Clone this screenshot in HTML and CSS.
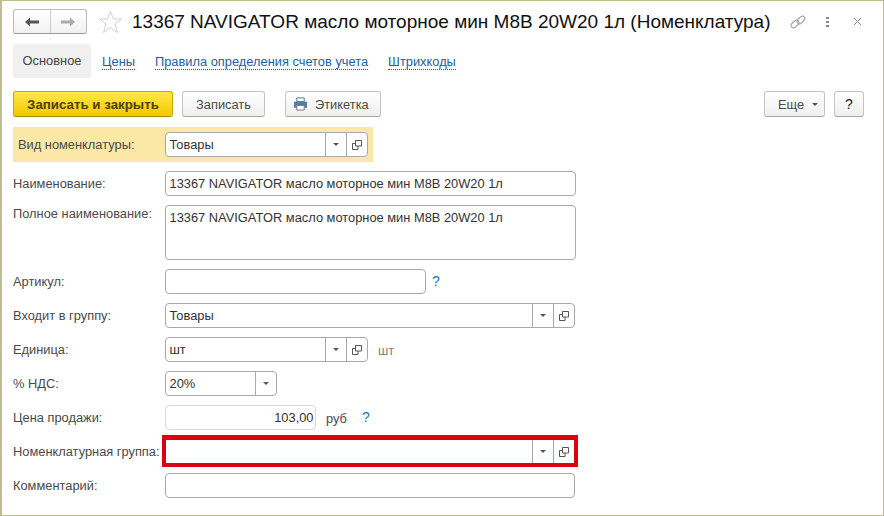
FILE: index.html
```html
<!DOCTYPE html>
<html lang="ru">
<head>
<meta charset="utf-8">
<title>13367 NAVIGATOR</title>
<link rel="stylesheet" href="styles.css">
</head>
<body>
<div class="window">
  <header class="head">
    <div class="nav">
      <button class="nav-btn"><svg width="16" height="12" viewBox="0 0 16 12"><path d="M1 6 6 1.500V4.600H15V7.400H6V10.500Z" fill="#555"/></svg></button>
      <button class="nav-btn nav-btn-next"><svg width="16" height="12" viewBox="0 0 16 12"><path d="M15 6 10 1.500V4.600H1V7.400H10V10.500Z" fill="#aaa"/></svg></button>
    </div>
    <svg class="star" width="25" height="24" viewBox="0 0 25 24"><path d="M12.500 1.500 15.500 9H23.500L17 14 19.500 22.500 12.500 17.500 5.500 22.500 8 14 1.500 9H9.500Z" fill="#fff" stroke="#cfcfcf" stroke-width="1"/></svg>
    <h1 class="title">13367 NAVIGATOR масло моторное мин M8B 20W20 1л (Номенклатура)</h1>
    <div class="head-tools">
      <svg width="16" height="16" viewBox="0 0 16 16" fill="none" stroke="#999" stroke-width="1"><rect x="0.500" y="7.500" width="9" height="5" rx="2.500" transform="rotate(-45 5 10)"/><rect x="6.500" y="3.500" width="9" height="5" rx="2.500" transform="rotate(-45 11 6)"/></svg>
      <span class="dots"><i></i><i></i><i></i></span>
      <svg width="9" height="9" viewBox="0 0 9 9" stroke="#888" stroke-width="1"><path d="M1 1 8 8M8 1 1 8"/></svg>
    </div>
  </header>

  <nav class="tabs">
    <span class="tab tab-active">Основное</span>
    <a class="tab">Цены</a>
    <a class="tab">Правила определения счетов учета</a>
    <a class="tab">Штрихкоды</a>
  </nav>

  <div class="commands">
    <button class="btn btn-primary">Записать и закрыть</button>
    <button class="btn btn-save">Записать</button>
    <button class="btn btn-label">
      <svg width="15" height="14" viewBox="0 0 16 15"><path d="M4 1h8v4H4z" fill="#fff" stroke="#4f6f8f"/><path d="M1 5h14v6.500H1z" fill="#4f7fa8"/><path d="M4 9h8v5H4z" fill="#fff" stroke="#777"/></svg>
      Этикетка
    </button>
    <span class="spacer"></span>
    <button class="btn btn-more">Еще <i class="caret"></i></button>
    <button class="btn btn-help">?</button>
  </div>

  <form class="form">
    <div class="row row-marked">
      <label class="label">Вид номенклатуры:</label>
      <div class="field w-kind"><span class="value">Товары</span><span class="cell"><i class="caret"></i></span><span class="cell"><svg class="open" width="10" height="10" viewBox="0 0 10 10" fill="none" stroke="#555"><path d="M3.500.5h6v5.500h-6z"/><path d="M3.500 3.500H.5V9.500h5.500V6"/></svg></span></div>
    </div>
    <div class="row">
      <label class="label">Наименование:</label>
      <div class="field w-name"><span class="value">13367 NAVIGATOR масло моторное мин M8B 20W20 1л</span></div>
    </div>
    <div class="row">
      <label class="label label-top">Полное наименование:</label>
      <div class="field w-name field-tall"><span class="value">13367 NAVIGATOR масло моторное мин M8B 20W20 1л</span></div>
    </div>
    <div class="row">
      <label class="label">Артикул:</label>
      <div class="field w-sku"></div>
      <span class="hint">?</span>
    </div>
    <div class="row">
      <label class="label">Входит в группу:</label>
      <div class="field w-wide"><span class="value">Товары</span><span class="cell"><i class="caret"></i></span><span class="cell"><svg class="open" width="10" height="10" viewBox="0 0 10 10" fill="none" stroke="#555"><path d="M3.500.5h6v5.500h-6z"/><path d="M3.500 3.500H.5V9.500h5.500V6"/></svg></span></div>
    </div>
    <div class="row">
      <label class="label">Единица:</label>
      <div class="field w-unit"><span class="value">шт</span><span class="cell"><i class="caret"></i></span><span class="cell"><svg class="open" width="10" height="10" viewBox="0 0 10 10" fill="none" stroke="#555"><path d="M3.500.5h6v5.500h-6z"/><path d="M3.500 3.500H.5V9.500h5.500V6"/></svg></span></div>
      <span class="unit-note">шт</span>
    </div>
    <div class="row">
      <label class="label">% НДС:</label>
      <div class="field w-vat"><span class="value">20%</span><span class="cell"><i class="caret"></i></span></div>
    </div>
    <div class="row">
      <label class="label">Цена продажи:</label>
      <div class="field w-price field-soft"><span class="value value-right">103,00</span></div>
      <span class="currency">руб</span>
      <span class="hint hint-price">?</span>
    </div>
    <div class="row">
      <label class="label">Номенклатурная группа:</label>
      <div class="field w-wide field-flagged"><span class="value"></span><span class="cell"><i class="caret"></i></span><span class="cell"><svg class="open" width="10" height="10" viewBox="0 0 10 10" fill="none" stroke="#555"><path d="M3.500.5h6v5.500h-6z"/><path d="M3.500 3.500H.5V9.500h5.500V6"/></svg></span></div>
    </div>
    <div class="row">
      <label class="label">Комментарий:</label>
      <div class="field w-wide"></div>
    </div>
  </form>
</div>
</body>
</html>
```
FILE: styles.css
```css
* { box-sizing: border-box; }
html, body { margin: 0; height: 100%; }
body { font-family: "Liberation Sans", Arial, sans-serif; font-size: 12.85px; color: #4a4a4a; background: #fff; }
.window { width: 884px; height: 516px; border: 1px solid #bdbd8e; border-width: 1px 1px 1px 2px; padding: 8px 19px 0 11px; overflow: hidden; }
.head { display: flex; align-items: center; height: 25px; }
.nav { display: flex; width: 74px; height: 25px; border: 1px solid #bdbdbd; border-bottom-color: #999; border-radius: 3px; background: linear-gradient(#fff, #f1f1f1); }
.nav-btn { flex: 1; border: 0; padding: 0; background: none; display: flex; align-items: center; justify-content: center; }
.nav-btn-next { border-left: 1px solid #ccc; }
.star { margin-left: 11px; flex: none; }
.title { margin: 0 0 0 9px; font-size: 19px; font-weight: 400; color: #111; white-space: nowrap; }
.head-tools { display: flex; align-items: center; margin-left: 19px; }
.dots { display: flex; flex-direction: column; gap: 2px; margin: 0 24px 0 20px; }
.dots i { width: 3px; height: 2px; background: #888; }
.tabs { display: flex; align-items: center; height: 34px; margin-top: 10px; }
.tab { color: #1c5f9c; border-bottom: 1px dotted #1c5f9c; margin-left: 20px; line-height: 14px; margin-top: 2px; }
.tab-active { margin: 0; width: 78px; height: 34px; line-height: 34px; text-align: center; color: #444; background: #f0f0f0; border: 0; border-radius: 3px; }
.tab-active + .tab { margin-left: 11px; }
.commands { display: flex; align-items: center; height: 26px; margin-top: 13px; }
.btn { height: 26px; border: 1px solid #c4c4c4; border-bottom-color: #a5a5a5; border-radius: 3px; background: linear-gradient(#fff, #efefef); font: inherit; color: #4a4a4a; padding: 0; display: flex; align-items: center; justify-content: center; gap: 7px; }
.btn-primary { width: 160px; font-weight: 700; font-size: 13.3px; color: #4d4100; border-color: #c9a800; border-bottom-color: #a98f00; background: linear-gradient(#ffe94a, #f5c800); }
.btn-save { width: 83px; margin-left: 9px; }
.btn-label { width: 96px; margin-left: 20px; justify-content: flex-start; padding-left: 7px; }
.spacer { flex: 1; }
.btn-more { width: 61px; justify-content: flex-start; padding-left: 13px; gap: 8px; }
.btn-help { width: 30px; margin-left: 9px; font-size: 14px; color: #222; }
.caret { display: inline-block; width: 0; height: 0; border: 3px solid transparent; border-top: 3px solid #555; border-bottom: 0; }
.form { display: flex; flex-direction: column; gap: 9px; margin-top: 10px; }
.row { display: flex; align-items: flex-start; min-height: 25px; }
.label { width: 152px; flex: none; line-height: 26px; height: 25px; color: #4a4a4a; white-space: nowrap; }
.label-top { line-height: 17px; }
.row-marked { width: 360px; padding: 5px; background: #fbe8a6; }
.row-marked .label { width: 147px; }
.field { height: 25px; display: flex; border: 1px solid #a9a9a9; border-radius: 4px; background: #fff; }
.field-tall { height: 55px; }
.field-soft { border-color: #d9d9d9; }
.field-flagged { border-color: #dc0010; border-radius: 0; box-shadow: 0 0 0 3px #dc0010, 0 -1px 0 3px #dc0010; }
.value { flex: 1; padding: 0 3.500px; line-height: 24px; color: #333; white-space: nowrap; }
.value-right { text-align: right; padding-right: 1.500px; }
.cell { width: 21px; flex: none; border-left: 1px solid #a9a9a9; display: flex; align-items: center; justify-content: center; }
.w-kind { width: 203px; }
.w-name { width: 411px; }
.w-sku { width: 261px; }
.w-wide { width: 410px; }
.w-unit { width: 203px; }
.w-vat { width: 112px; }
.w-price { width: 151px; }
.hint { margin-left: 6px; line-height: 25px; height: 25px; font-size: 14px; color: #1c75b8; }
.hint-price { margin-left: 15px; }
.unit-note { margin-left: 10px; line-height: 27px; height: 25px; color: #857a74; }
.currency { margin-left: 10px; line-height: 27px; height: 25px; }
```
